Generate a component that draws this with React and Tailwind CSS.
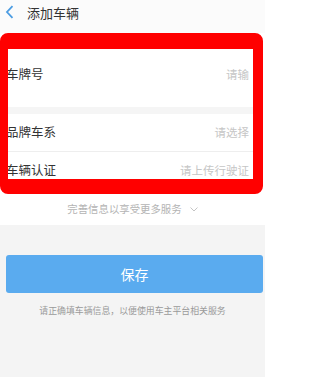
import React from "react";

const rows = [
  { label: "车牌号", hint: "请输" },
  { label: "品牌车系", hint: "请选择" },
  { label: "车辆认证", hint: "请上传行驶证" },
];

function Row({ label, hint, className }) {
  return (
    <div className={"flex justify-between pr-[4px] bg-white " + className}>
      <span className="-ml-[2px] text-[12.5px] leading-[16px] text-[#333]">{label}</span>
      <span className="text-[11.5px] leading-[16px] text-[#c6c6c6]">{hint}</span>
    </div>
  );
}

export default function App() {
  return (
    <div
      className="w-[265px] h-[377px] bg-[#f4f4f4] overflow-hidden"
      style={{ fontFamily: '"Noto Sans CJK SC", "Noto Sans", sans-serif' }}
    >
      {/* top bar */}
      <div className="h-[33px] bg-[#fbfbfb] flex items-start pt-[5px]">
        <svg width="9" height="14" viewBox="0 0 9 14" className="ml-[5px]">
          <path d="M7.5 1.2 L2 7 L7.5 12.8" fill="none" stroke="#4b9ce2" strokeWidth="1.8" />
        </svg>
        <span className="ml-[13px] text-[13px] text-[#333] leading-[15px]">添加车辆</span>
      </div>

      <section className="bg-white">
        <div className="mr-[2px] rounded-[8px] border-[#ff0000] border-l-[8px] border-t-[16px] border-r-[10px] border-b-[15px] overflow-hidden bg-white">
          <Row {...rows[0]} className="h-[58px] pt-[17px]" />
          <div className="h-[7px] bg-[#f5f5f5]" />
          <Row {...rows[1]} className="h-[38px] pt-[10px] border-b border-[#eeeeee]" />
          <Row {...rows[2]} className="h-[27px] pt-[10px]" />
        </div>
        <div className="h-[31px] flex items-center justify-center gap-[8px]">
          <span className="text-[10.4px] text-[#b4b4b4] leading-none">完善信息以享受更多服务</span>
          <svg width="8" height="5" viewBox="0 0 8 5">
            <path d="M0.5 0.5 L4 4 L7.5 0.5" fill="none" stroke="#c4c4c4" strokeWidth="1" />
          </svg>
        </div>
      </section>

      <button className="mt-[30px] ml-[6px] w-[257px] h-[38px] rounded-[3px] bg-[#5aabef] text-white text-[14px] leading-none">
        保存
      </button>
      <p className="mt-[12px] text-center text-[8.9px] leading-[12px] text-[#9a9a9a]">
        请正确填车辆信息，以便使用车主平台相关服务
      </p>
    </div>
  );
}
